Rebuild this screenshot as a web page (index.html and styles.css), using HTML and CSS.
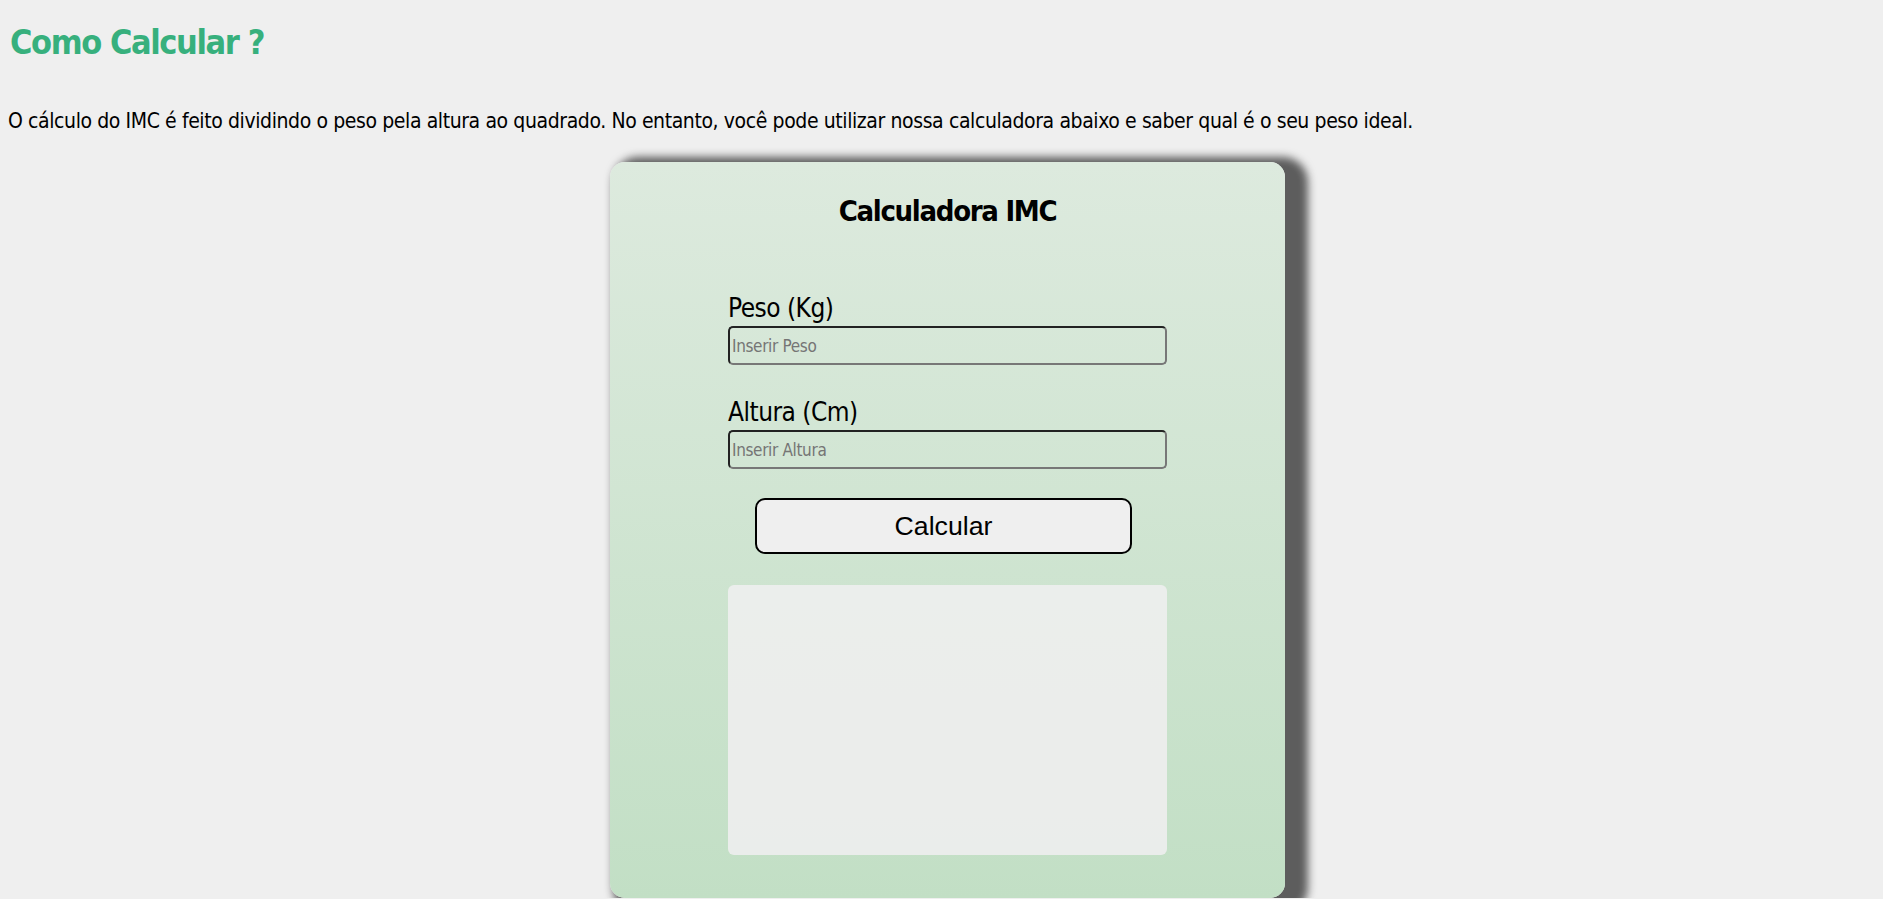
FILE: index.html
```html
<!DOCTYPE html>
<html lang="pt-BR">
<head>
<meta charset="utf-8">
<title>Como Calcular IMC</title>
<link rel="stylesheet" href="styles.css">
</head>
<body>
<main class="page">
  <h1 class="page-title">Como Calcular ?</h1>
  <p class="intro">O cálculo do IMC é feito dividindo o peso pela altura ao quadrado. No entanto, você pode utilizar nossa calculadora abaixo e saber qual é o seu peso ideal.</p>
  <div class="stage">
    <section class="card">
      <h2 class="card-title">Calculadora IMC</h2>
      <form class="form">
        <div class="field">
          <label class="label" for="peso">Peso (Kg)</label>
          <input class="input" id="peso" type="text" placeholder="Inserir Peso">
        </div>
        <div class="field">
          <label class="label" for="altura">Altura (Cm)</label>
          <input class="input" id="altura" type="text" placeholder="Inserir Altura">
        </div>
        <button class="btn" type="button">Calcular</button>
        <div class="result"></div>
      </form>
    </section>
  </div>
</main>
</body>
</html>
```
FILE: styles.css
```css
html, body {
  margin: 0;
  padding: 0;
  background: #efefef;
  overflow: hidden;
}

.page {
  padding: 0 8px;
  font-family: "DejaVu Sans Condensed", "DejaVu Sans", sans-serif;
  color: #000;
}

.page-title {
  margin: 17px 0 0;
  padding-left: 2px;
  font-size: 34px;
  line-height: 50px;
  font-weight: 700;
  letter-spacing: -1.4px;
  color: #37b07d;
}

.intro {
  margin: 40px 0 0;
  font-size: 21px;
  line-height: 28px;
  letter-spacing: -0.4px;
}

.stage {
  display: flex;
  justify-content: center;
  padding-left: 12px;
  margin-top: 27px;
}

.card {
  width: 675px;
  box-sizing: border-box;
  padding: 29px 0 43px;
  border-radius: 15px;
  background: linear-gradient(to bottom, #ddeade, #c2dfc5);
  box-shadow: 13px 5px 8px 10px #5d5d5d;
}

.card-title {
  margin: 0;
  text-align: center;
  font-size: 29px;
  line-height: 40px;
  font-weight: 700;
  letter-spacing: -1.3px;
}

.form {
  width: 439px;
  margin: 61px auto 0;
  display: flex;
  flex-direction: column;
}

.field {
  display: flex;
  flex-direction: column;
  gap: 2px;
  margin-bottom: 31px;
}

.field:nth-child(2) {
  margin-bottom: 29px;
}

.label {
  font-size: 26px;
  line-height: 32px;
  letter-spacing: -0.5px;
}

.input {
  box-sizing: border-box;
  height: 39px;
  margin: 0;
  padding: 0 2px;
  border: 2px solid #777;
  border-top-color: #222;
  border-left-color: #222;
  border-radius: 5px;
  background: transparent;
  font-family: inherit;
  font-size: 17px;
  letter-spacing: -0.35px;
  color: #000;
}

.input::placeholder {
  color: #757575;
}

.btn {
  box-sizing: border-box;
  width: 377px;
  height: 56px;
  margin: 0 0 31px 27px;
  border: 2px solid #000;
  border-radius: 10px;
  background: #efefef;
  font-family: "Liberation Sans", Arial, sans-serif;
  font-size: 26.67px;
  color: #000;
}

.result {
  height: 270px;
  border-radius: 6px;
  background: rgba(238, 238, 238, 0.9);
}
```
